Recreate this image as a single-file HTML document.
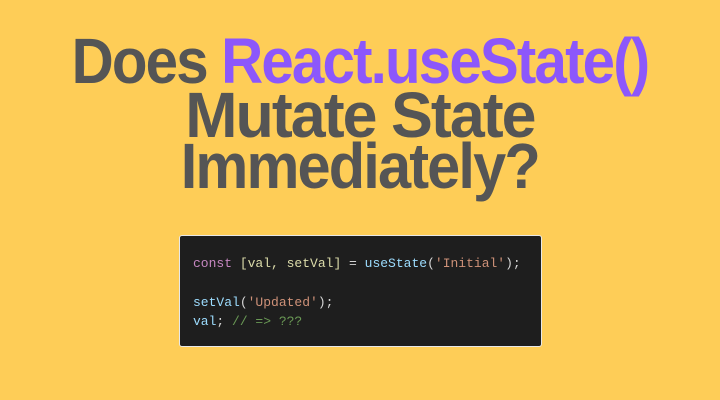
<!DOCTYPE html>
<html><head><meta charset="utf-8"><style>
html,body{margin:0;padding:0;}
body{width:720px;height:400px;background:#fecd57;position:relative;overflow:hidden;font-family:"Liberation Sans",sans-serif;}
.t{position:absolute;left:0;width:720px;text-align:center;font-weight:bold;color:#555555;font-size:64px;letter-spacing:-2px;line-height:64px;white-space:nowrap;transform-origin:358px 0;}
.t span.p{color:#8c57fb;}
.code{position:absolute;left:179px;top:235px;width:361px;height:110px;background:#1e1e1e;border:1px solid #e8e8e8;border-radius:3px;box-sizing:content-box;}
.code pre{margin:0;position:absolute;left:13px;top:18px;font-family:"Liberation Mono","DejaVu Sans Mono",monospace;font-size:13px;line-height:19.3px;color:#d4d4d4;}
.k{color:#c586c0}.v{color:#9cdcfe}.f{color:#dcdcaa}.fn{color:#9cdcfe}.s{color:#ce9178}.c{color:#6a9955}
</style></head><body>
<div class="t" style="top:29px;transform:scaleX(0.91);transform-origin:360px 0;">Does <span class="p">React.useState()</span></div>
<div class="t" style="top:83px;transform:scaleX(0.98);transform-origin:356px 0;">Mutate State</div>
<div class="t" style="top:134px;transform:scaleX(0.93);transform-origin:357px 0;">Immediately?</div>
<div class="code"><pre><span class="k">const</span> <span class="f">[val, setVal]</span> = <span class="fn">useState</span>(<span class="s">'Initial'</span>);

<span class="fn">setVal</span>(<span class="s">'Updated'</span>);
<span class="v">val</span>; <span class="c">// =&gt; ???</span></pre></div>
</body></html>
